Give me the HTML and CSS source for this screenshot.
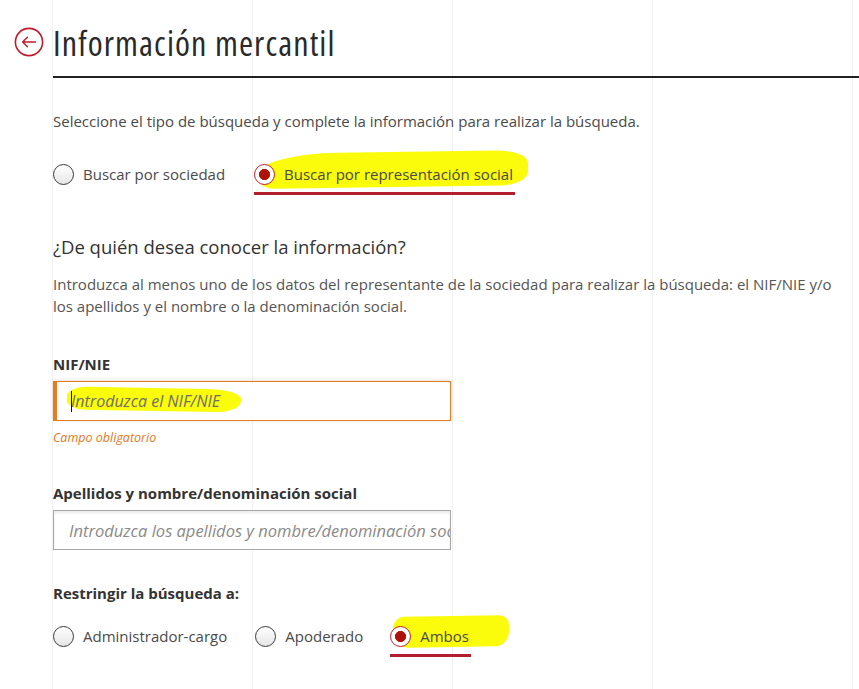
FILE: index.html
```html
<!DOCTYPE html>
<html lang="es">
<head>
<meta charset="utf-8">
<title>Información mercantil</title>
<link rel="stylesheet" href="styles.css">
</head>
<body>
<div class="page">
  <header class="page-head">
    <a class="back" href="#" aria-label="Volver">
      <svg width="30" height="30" viewBox="0 0 30 30" aria-hidden="true">
        <circle cx="15" cy="15" r="13.6" fill="none" stroke="#c21a2b" stroke-width="1.6"/>
        <path d="M21.5 15H8.6M13.4 10.2L8.6 15l4.8 4.8" fill="none" stroke="#c21a2b" stroke-width="1.4" stroke-linecap="round" stroke-linejoin="round"/>
      </svg>
    </a>
    <h1 class="title">Información mercantil</h1>
  </header>

  <main class="content">
    <p class="intro">Seleccione el tipo de búsqueda y complete la información para realizar la búsqueda.</p>

    <div class="radio-row type-row">
      <label class="opt">
        <span class="radio"></span>
        <span class="opt-text">Buscar por sociedad</span>
      </label>
      <label class="opt opt-selected mark-a">
        <span class="radio radio-on"></span>
        <span class="opt-text">Buscar por representación social</span>
      </label>
    </div>

    <h2 class="subtitle">¿De quién desea conocer la información?</h2>
    <p class="help">Introduzca al menos uno de los datos del representante de la sociedad para realizar la búsqueda: el NIF/NIE y/o los apellidos y el nombre o la denominación social.</p>

    <div class="field field-nif">
      <label class="field-label" for="nif">NIF/NIE</label>
      <div class="input-box input-error">
        <span class="caret"></span>
        <span class="mark-b"></span>
        <input id="nif" class="text-input" type="text" placeholder="Introduzca el NIF/NIE">
      </div>
      <p class="field-msg">Campo obligatorio</p>
    </div>

    <div class="field field-name">
      <label class="field-label" for="nombre">Apellidos y nombre/denominación social</label>
      <div class="input-box">
        <input id="nombre" class="text-input" type="text" placeholder="Introduzca los apellidos y nombre/denominación social">
      </div>
    </div>

    <p class="field-label restrict">Restringir la búsqueda a:</p>
    <div class="radio-row role-row">
      <label class="opt">
        <span class="radio"></span>
        <span class="opt-text">Administrador-cargo</span>
      </label>
      <label class="opt">
        <span class="radio"></span>
        <span class="opt-text">Apoderado</span>
      </label>
      <label class="opt opt-selected mark-c">
        <span class="radio radio-on"></span>
        <span class="opt-text">Ambos</span>
      </label>
    </div>
  </main>
</div>
</body>
</html>
```

FILE: styles.css
```css
* { box-sizing: border-box; }

html, body { margin: 0; padding: 0; }

body {
  font-family: "Open Sans", "Noto Sans", sans-serif;
  color: #444;
  font-size: 15px;
  /* faint column grid of the layout */
  background-color: #fff;
  background-image: repeating-linear-gradient(to right, #f0f0f0 0, #f0f0f0 1px, transparent 1px, transparent 200px);
  background-position: 52px 0;
  min-height: 689px;
  overflow: hidden;
}

.page { width: 859px; }

/* ---------- header ---------- */
.page-head {
  display: flex;
  align-items: flex-start;
}

.back {
  display: flex;
  width: 53px;
  padding-top: 27px;
  padding-left: 14px;
}

.title {
  flex: 1;
  margin: 0;
  padding: 23px 0 13px;
  height: 78px;
  border-bottom: 2px solid #222;
  font-family: "Open Sans", "DejaVu Sans Condensed", sans-serif;
  font-stretch: 75%;
  font-weight: 400;
  font-size: 34px;
  line-height: 40px;
  letter-spacing: 1.1px;
  color: #2a2a2a;
}

/* ---------- content ---------- */
.content {
  padding-left: 53px;
  padding-right: 20px;
}

.intro {
  margin: 32px 0 0;
  line-height: 22px;
  color: #4a4a4a;
}

.radio-row {
  display: flex;
  align-items: center;
}

.type-row { margin-top: 30px; gap: 29px; }
.role-row { margin-top: 20px; }

.opt {
  position: relative;
  isolation: isolate;
  display: flex;
  align-items: center;
  gap: 9px;
  height: 24px;
  color: #4a4a4a;
  line-height: 24px;
  cursor: pointer;
}

.role-row .opt:nth-child(1) { margin-right: 28px; }
.role-row .opt:nth-child(2) { margin-right: 27px; }

.radio {
  width: 21px;
  height: 21px;
  flex: none;
  border-radius: 50%;
  border: 1px solid #3a3a3a;
  background: linear-gradient(#ffffff, #e6e6e6);
}

.radio-on {
  border: 1.5px solid #c21a2b;
  background: radial-gradient(circle, #a81208 0, #b3140c 5.3px, #fff 5.8px);
}

/* red bar under the selected option */
.opt-selected::after {
  content: "";
  position: absolute;
  left: 0;
  right: -2px;
  bottom: -9px;
  height: 3px;
  background: #b31e2c;
}

/* yellow marker strokes */
.mark-a::before,
.mark-c::before,
.mark-b {
  content: "";
  position: absolute;
  z-index: -1;
  background: #fbfb0c;
}

.mark-a::before {
  left: 3px;
  right: -15px;
  top: -10px;
  bottom: -1px;
  border-radius: 30% 12% 10% 6% / 60% 35% 40% 40%;
  transform: rotate(-0.8deg);
}

.mark-c::before {
  left: 3px;
  right: -40px;
  top: -8px;
  bottom: 1px;
  border-radius: 10% 8% 12% 14% / 40% 30% 50% 50%;
  transform: rotate(-1deg);
}

.subtitle {
  margin: 48px 0 0;
  font-size: 18.5px;
  font-weight: 400;
  line-height: 26px;
  color: #333;
}

.help {
  margin: 13px 0 0;
  line-height: 22px;
  color: #555;
}

.field-label {
  display: block;
  margin: 0;
  font-weight: 700;
  font-size: 15px;
  line-height: 22px;
  color: #333;
}

.field-nif { margin-top: 36px; }
.field-nif .input-box { margin-top: 6px; }

.input-box {
  position: relative;
  isolation: isolate;
  width: 398px;
  height: 40px;
  border: 1px solid #a8a8a8;
  background: #fff;
  box-shadow: inset 0 2px 3px rgba(0, 0, 0, 0.08);
}

.input-error {
  border-color: #ea7a1c;
  border-left: 4px solid #ea7a1c;
  box-shadow: 0 -1px 4px rgba(0, 0, 0, 0.12);
}

.text-input {
  position: relative;
  z-index: 1;
  width: 100%;
  height: 100%;
  border: 0;
  outline: 0;
  padding: 0 0 0 15px;
  background: transparent;
  font-family: "Open Sans", "Noto Sans", sans-serif;
  font-size: 16.5px;
  color: #333;
}

.input-error .text-input { padding-left: 14px; font-size: 16px; }

.text-input::placeholder {
  font-style: italic;
  color: #8a8a8a;
  opacity: 1;
}

.input-error .text-input::placeholder { color: #6e6e6e; }

.caret {
  position: absolute;
  z-index: 2;
  left: 14px;
  top: 9px;
  width: 1px;
  height: 21px;
  background: #111;
}

.mark-b {
  left: 10px;
  top: 6px;
  width: 174px;
  height: 23px;
  border-radius: 12% 20% 14% 10% / 40% 40% 50% 40%;
  transform: rotate(1deg);
}

.field-msg {
  margin: 9px 0 0;
  font-size: 12.5px;
  font-style: italic;
  line-height: 16px;
  color: #e8761a;
}

.field-name { margin-top: 36px; }
.field-name .input-box { margin-top: 6px; }

.restrict { margin-top: 32px; }
```
